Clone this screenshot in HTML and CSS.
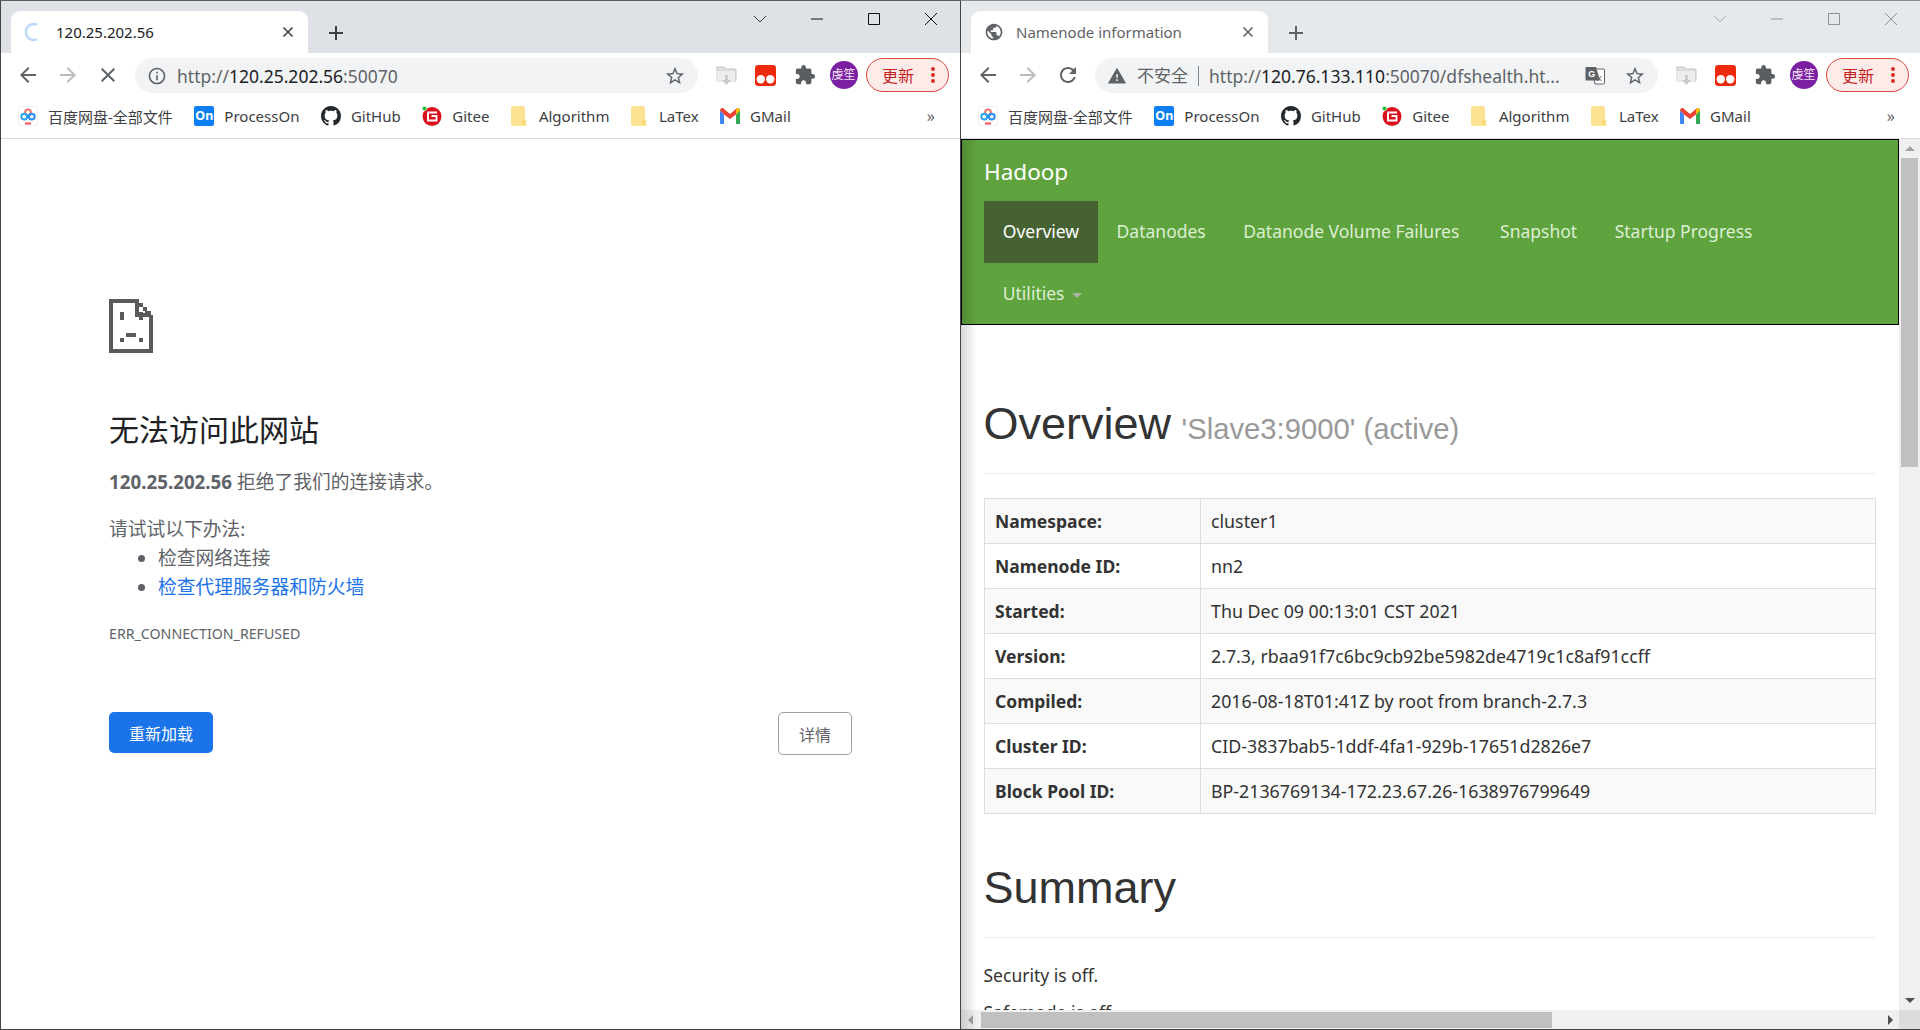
FILE: index.html
```html
<!DOCTYPE html>
<html lang="zh-CN">
<head>
  <meta charset="UTF-8" />
  <title>Two browser windows</title>
  <link rel="stylesheet" href="styles.css">
</head>
<body>

  <!-- Shared icons -->
  <svg class="sprite" width="0" height="0">
    <symbol id="i-back" viewBox="0 0 24 24"><path d="M20 11H7.83l5.59-5.59L12 4l-8 8 8 8 1.41-1.41L7.83 13H20v-2z"/></symbol>
    <symbol id="i-forward" viewBox="0 0 24 24"><path d="M4 11h12.17l-5.59-5.59L12 4l8 8-8 8-1.41-1.41L16.17 13H4v-2z"/></symbol>
    <symbol id="i-stop" viewBox="0 0 24 24"><path d="M19 6.41 17.59 5 12 10.59 6.41 5 5 6.41 10.59 12 5 17.59 6.41 19 12 13.41 17.59 19 19 17.59 13.41 12z"/></symbol>
    <symbol id="i-reload" viewBox="0 0 24 24"><path d="M17.65 6.35C16.2 4.9 14.21 4 12 4c-4.42 0-7.99 3.58-7.99 8s3.57 8 7.99 8c3.73 0 6.84-2.55 7.73-6h-2.08c-.82 2.33-3.04 4-5.65 4-3.31 0-6-2.69-6-6s2.69-6 6-6c1.66 0 3.14.69 4.22 1.78L13 11h7V4l-2.35 2.35z"/></symbol>
    <symbol id="i-info" viewBox="0 0 24 24"><path d="M11 7h2v2h-2zm0 4h2v6h-2zm1-9C6.48 2 2 6.48 2 12s4.48 10 10 10 10-4.48 10-10S17.52 2 12 2zm0 18c-4.41 0-8-3.59-8-8s3.59-8 8-8 8 3.59 8 8-3.59 8-8 8z"/></symbol>
    <symbol id="i-warn" viewBox="0 0 24 24"><path d="M1 21h22L12 2 1 21zm12-3h-2v-2h2v2zm0-4h-2v-4h2v4z"/></symbol>
    <symbol id="i-globe" viewBox="0 0 24 24"><path d="M12 2C6.48 2 2 6.48 2 12s4.48 10 10 10 10-4.48 10-10S17.52 2 12 2zm-1 17.93c-3.95-.49-7-3.85-7-7.93 0-.62.08-1.21.21-1.79L9 15v1c0 1.1.9 2 2 2v1.93zm6.9-2.54c-.26-.81-1-1.39-1.9-1.39h-1v-3c0-.55-.45-1-1-1H8v-2h2c.55 0 1-.45 1-1V7h2c1.1 0 2-.9 2-2v-.41c2.93 1.19 5 4.06 5 7.41 0 2.08-.8 3.97-2.1 5.39z"/></symbol>
    <symbol id="i-star" viewBox="0 0 24 24"><path d="M22 9.24l-7.19-.62L12 2 9.19 8.63 2 9.24l5.46 4.73L5.82 21 12 17.27 18.18 21l-1.63-7.03L22 9.24zM12 15.4l-3.76 2.27 1-4.28-3.32-2.88 4.38-.38L12 6.1l1.71 4.04 4.38.38-3.32 2.88 1 4.28L12 15.4z"/></symbol>
    <symbol id="i-puzzle" viewBox="0 0 24 24"><path d="M20.5 11H19V7c0-1.1-.9-2-2-2h-4V3.5C13 2.12 11.88 1 10.5 1S8 2.12 8 3.5V5H4c-1.1 0-1.99.9-1.99 2v3.8H3.5c1.49 0 2.7 1.21 2.7 2.7s-1.21 2.7-2.7 2.7H2V20c0 1.1.9 2 2 2h3.8v-1.5c0-1.49 1.21-2.7 2.7-2.7 1.49 0 2.7 1.21 2.7 2.7V22H17c1.1 0 2-.9 2-2v-4h1.5c1.38 0 2.5-1.12 2.5-2.5S21.88 11 20.5 11z"/></symbol>
    <symbol id="i-x" viewBox="0 0 12 12"><path d="M1.5 1.5l9 9M10.5 1.5l-9 9" fill="none" stroke="currentColor" stroke-width="1.6"/></symbol>
    <symbol id="i-plus" viewBox="0 0 16 16"><path d="M8 1v14M1 8h14" fill="none" stroke="currentColor" stroke-width="2"/></symbol>
    <symbol id="i-chevron" viewBox="0 0 14 8"><path d="M1 1l6 6 6-6" fill="none" stroke="currentColor" stroke-width="1"/></symbol>
    <symbol id="i-min" viewBox="0 0 12 12"><path d="M0 6h12" stroke="currentColor" stroke-width="1"/></symbol>
    <symbol id="i-max" viewBox="0 0 12 12"><path d="M.5.5h11v11H.5z" fill="none" stroke="currentColor" stroke-width="1"/></symbol>
    <symbol id="i-close" viewBox="0 0 12 12"><path d="M0 0l12 12M12 0L0 12" fill="none" stroke="currentColor" stroke-width="1"/></symbol>
    <symbol id="i-baidu" viewBox="0 0 20 20">
      <rect x=".5" y=".5" width="19" height="19" rx="3" fill="#fff" stroke="#eceef1"/>
      <circle cx="10" cy="6.4" r="2.9" fill="none" stroke="#f0776b" stroke-width="2"/>
      <circle cx="6.2" cy="10.6" r="2.9" fill="none" stroke="#2aa8f2" stroke-width="2"/>
      <circle cx="13.8" cy="10.6" r="2.9" fill="none" stroke="#2a8ef2" stroke-width="2"/>
      <path d="M7 17.5h6" stroke="#ef4d5b" stroke-width="2"/>
    </symbol>
    <symbol id="i-github" viewBox="0 0 16 16"><path fill="#24292e" d="M8 0C3.58 0 0 3.58 0 8c0 3.54 2.29 6.53 5.47 7.59.4.07.55-.17.55-.38 0-.19-.01-.82-.01-1.49-2.01.37-2.53-.49-2.69-.94-.09-.23-.48-.94-.82-1.13-.28-.15-.68-.52-.01-.53.63-.01 1.08.58 1.23.82.72 1.21 1.87.87 2.33.66.07-.52.28-.87.51-1.07-1.78-.2-3.64-.89-3.64-3.95 0-.87.31-1.59.82-2.15-.08-.2-.36-1.02.08-2.12 0 0 .67-.21 2.2.82.64-.18 1.32-.27 2-.27.68 0 1.36.09 2 .27 1.53-1.04 2.2-.82 2.2-.82.44 1.1.16 1.92.08 2.12.51.56.82 1.27.82 2.15 0 3.07-1.87 3.75-3.65 3.95.29.25.54.73.54 1.48 0 1.07-.01 1.93-.01 2.2 0 .21.15.46.55.38A8.013 8.013 0 0016 8c0-4.42-3.58-8-8-8z"/></symbol>
    <symbol id="i-gitee" viewBox="0 0 20 20">
      <circle cx="10" cy="10.5" r="9.5" fill="#d8121c"/>
      <path d="M5.5 6.5h9.5M6 6.5v8h8.5v-4.5H9.5" fill="none" stroke="#fff" stroke-width="1.9"/>
      <circle cx="2.5" cy="2.5" r="2.3" fill="#1bb933" stroke="#fff" stroke-width=".6"/>
    </symbol>
    <symbol id="i-folder" viewBox="0 0 16 20">
      <path d="M1.5 0h10.5a1.5 1.5 0 011.5 1.5V13l2 1v4.5a1.5 1.5 0 01-1.5 1.5H1.500A1.500 1.500 0 010 18.500V1.500A1.500 1.500 0 011.500 0z" fill="#fde293"/>
      <path d="M12.500 14v5" stroke="#f5c94e" stroke-width="1"/>
      <path d="M13.500 1v12" stroke="#f3d37a" stroke-width=".6"/>
    </symbol>
    <symbol id="i-gmail" viewBox="0 0 20 16">
      <path d="M0 2.500V16h4V6.500z" fill="#4285f4"/>
      <path d="M20 2.500V16h-4V6.500z" fill="#34a853"/>
      <path d="M0 2.500C0 .5 2 -.5 3.500.5L10 6l6.500-5.500C18 -.5 20 .5 20 2.500L16 6.500 10 11 4 6.500z" fill="#ea4335"/>
      <path d="M16 6.500l4-4C20 1 19 0 17.500 0L16 1.300z" fill="#fbbc04"/>
    </symbol>
    <symbol id="i-save" viewBox="0 0 21 21">
      <path d="M1 2h7l2 2h9a1 1 0 011 1v10a1 1 0 01-1 1H1z" fill="#dcdee0" stroke="#c2c4c6"/>
      <path d="M1 6h18v10H1z" fill="#eceded"/>
      <path d="M9 10h3v5h3l-4.500 5L6 15h3z" fill="#c8c9cb"/>
    </symbol>
    <symbol id="i-monkey" viewBox="0 0 20 20">
      <rect width="20" height="20" rx="3" fill="#ee2a0c"/>
      <circle cx="5.500" cy="13.500" r="4" fill="#fff"/>
      <circle cx="14.500" cy="13.500" r="4" fill="#fff"/>
    </symbol>
  </svg>

  <main class="desktop">

    <!-- Left window: connection refused -->
    <section class="window">
      <div class="tabstrip">
        <div class="tab">
          <svg class="tab-icon" viewBox="0 0 20 20"><path d="M13 2.600A8 8 0 1 0 13 17.400" fill="none" stroke="#bcd8fa" stroke-width="2.400"/></svg>
          <span class="tab-title">120.25.202.56</span>
          <svg class="tab-close"><use href="#i-x"/></svg>
        </div>
        <svg class="new-tab"><use href="#i-plus"/></svg>
        <div class="caption">
          <span class="caption-btn caption-menu"><svg class="glyph-chevron"><use href="#i-chevron"/></svg></span>
          <span class="caption-btn"><svg class="glyph"><use href="#i-min"/></svg></span>
          <span class="caption-btn"><svg class="glyph"><use href="#i-max"/></svg></span>
          <span class="caption-btn"><svg class="glyph"><use href="#i-close"/></svg></span>
        </div>
      </div>

      <div class="toolbar">
        <span class="tool"><svg class="tool-icon"><use href="#i-back"/></svg></span>
        <span class="tool tool-off"><svg class="tool-icon"><use href="#i-forward"/></svg></span>
        <span class="tool"><svg class="tool-icon"><use href="#i-stop"/></svg></span>
        <div class="omnibox">
          <svg class="omni-icon"><use href="#i-info"/></svg>
          <span class="url"><span class="url-dim">http://</span>120.25.202.56<span class="url-dim">:50070</span></span>
          <svg class="omni-star"><use href="#i-star"/></svg>
        </div>
        <div class="extensions">
          <span class="tool"><svg class="ext-icon"><use href="#i-save"/></svg></span>
          <span class="tool"><svg class="ext-icon"><use href="#i-monkey"/></svg></span>
          <span class="tool"><svg class="ext-icon ext-puzzle"><use href="#i-puzzle"/></svg></span>
          <span class="tool"><span class="avatar">虔笙</span></span>
        </div>
        <div class="update"><span>更新</span><i class="dots"></i></div>
      </div>

      <div class="bookmarks">
        <span class="bm"><svg class="bm-icon"><use href="#i-baidu"/></svg>百度网盘-全部文件</span>
        <span class="bm"><span class="bm-on">On</span>ProcessOn</span>
        <span class="bm"><svg class="bm-icon"><use href="#i-github"/></svg>GitHub</span>
        <span class="bm"><svg class="bm-icon"><use href="#i-gitee"/></svg>Gitee</span>
        <span class="bm"><svg class="bm-folder"><use href="#i-folder"/></svg>Algorithm</span>
        <span class="bm"><svg class="bm-folder"><use href="#i-folder"/></svg>LaTex</span>
        <span class="bm"><svg class="bm-icon"><use href="#i-gmail"/></svg>GMail</span>
        <span class="bm-more">»</span>
      </div>

      <div class="error-page">
        <svg class="sad-page" viewBox="0 0 44 54" shape-rendering="crispEdges">
          <path fill="#5a5a5a" fill-rule="evenodd" d="M0 0H30V4H34V8H38V12H42V16H44V54H0ZM4 4V50H40V18H26V4ZM30 8V14H36V12H34V8Z"/>
          <path fill="#5a5a5a" d="M11 13H15V21H11ZM30 13H34V21H30ZM17 34H27V38H17ZM11 39H15V43H11ZM30 39H34V43H30Z"/>
        </svg>
        <h1 class="error-title">无法访问此网站</h1>
        <p class="error-line"><strong>120.25.202.56</strong> 拒绝了我们的连接请求。</p>
        <p class="error-line">请试试以下办法:</p>
        <ul class="error-list">
          <li>检查网络连接</li>
          <li><a href="#proxy">检查代理服务器和防火墙</a></li>
        </ul>
        <div class="error-code">ERR_CONNECTION_REFUSED</div>
        <div class="error-actions">
          <button class="btn-reload">重新加载</button>
          <button class="btn-details">详情</button>
        </div>
      </div>
    </section>

    <!-- Right window: Hadoop namenode page -->
    <section class="window window-inactive">
      <div class="tabstrip">
        <div class="tab">
          <svg class="tab-icon tab-globe"><use href="#i-globe"/></svg>
          <span class="tab-title">Namenode information</span>
          <svg class="tab-close"><use href="#i-x"/></svg>
        </div>
        <svg class="new-tab"><use href="#i-plus"/></svg>
        <div class="caption">
          <span class="caption-btn caption-menu"><svg class="glyph-chevron"><use href="#i-chevron"/></svg></span>
          <span class="caption-btn"><svg class="glyph"><use href="#i-min"/></svg></span>
          <span class="caption-btn"><svg class="glyph"><use href="#i-max"/></svg></span>
          <span class="caption-btn"><svg class="glyph"><use href="#i-close"/></svg></span>
        </div>
      </div>

      <div class="toolbar">
        <span class="tool"><svg class="tool-icon"><use href="#i-back"/></svg></span>
        <span class="tool tool-off"><svg class="tool-icon"><use href="#i-forward"/></svg></span>
        <span class="tool"><svg class="tool-icon"><use href="#i-reload"/></svg></span>
        <div class="omnibox">
          <svg class="omni-icon"><use href="#i-warn"/></svg>
          <span class="not-secure">不安全</span>
          <span class="url"><span class="url-dim">http://</span>120.76.133.110<span class="url-dim">:50070/dfshealth.ht...</span></span>
          <svg class="omni-translate" viewBox="0 0 20 20">
            <path d="M7 3h11.500a1 1 0 011 1v13a1 1 0 01-1 1H10z" fill="#fff" stroke="#5f6368"/>
            <path d="M1.500 1h9.500l4 13.500H1.500a1 1 0 01-1-1V2a1 1 0 011-1z" fill="#5f6368"/>
            <text x="3.200" y="11" class="translate-g">G</text>
            <path d="M12 10l4.500 5M16.500 10l-4.500 5" stroke="#5f6368" stroke-width="1"/>
          </svg>
          <svg class="omni-star"><use href="#i-star"/></svg>
        </div>
        <div class="extensions">
          <span class="tool"><svg class="ext-icon"><use href="#i-save"/></svg></span>
          <span class="tool"><svg class="ext-icon"><use href="#i-monkey"/></svg></span>
          <span class="tool"><svg class="ext-icon ext-puzzle"><use href="#i-puzzle"/></svg></span>
          <span class="tool"><span class="avatar">虔笙</span></span>
        </div>
        <div class="update"><span>更新</span><i class="dots"></i></div>
      </div>

      <div class="bookmarks">
        <span class="bm"><svg class="bm-icon"><use href="#i-baidu"/></svg>百度网盘-全部文件</span>
        <span class="bm"><span class="bm-on">On</span>ProcessOn</span>
        <span class="bm"><svg class="bm-icon"><use href="#i-github"/></svg>GitHub</span>
        <span class="bm"><svg class="bm-icon"><use href="#i-gitee"/></svg>Gitee</span>
        <span class="bm"><svg class="bm-folder"><use href="#i-folder"/></svg>Algorithm</span>
        <span class="bm"><svg class="bm-folder"><use href="#i-folder"/></svg>LaTex</span>
        <span class="bm"><svg class="bm-icon"><use href="#i-gmail"/></svg>GMail</span>
        <span class="bm-more">»</span>
      </div>

      <div class="viewport">
        <div class="dfs-page">
          <nav class="hadoop-nav">
            <div class="brand">Hadoop</div>
            <ul class="nav-row">
              <li class="nav-active">Overview</li>
              <li>Datanodes</li>
              <li>Datanode Volume Failures</li>
              <li>Snapshot</li>
              <li>Startup Progress</li>
            </ul>
            <ul class="nav-row">
              <li>Utilities <i class="caret"></i></li>
            </ul>
          </nav>

          <div class="dfs-body">
            <h1 class="page-header">Overview <small>'Slave3:9000' (active)</small></h1>
            <table class="info-table">
              <tr><th>Namespace:</th><td>cluster1</td></tr>
              <tr><th>Namenode ID:</th><td>nn2</td></tr>
              <tr><th>Started:</th><td>Thu Dec 09 00:13:01 CST 2021</td></tr>
              <tr><th>Version:</th><td>2.7.3, rbaa91f7c6bc9cb92be5982de4719c1c8af91ccff</td></tr>
              <tr><th>Compiled:</th><td>2016-08-18T01:41Z by root from branch-2.7.3</td></tr>
              <tr><th>Cluster ID:</th><td>CID-3837bab5-1ddf-4fa1-929b-17651d2826e7</td></tr>
              <tr><th>Block Pool ID:</th><td>BP-2136769134-172.23.67.26-1638976799649</td></tr>
            </table>
            <h1 class="page-header summary">Summary</h1>
            <p class="dfs-text">Security is off.</p>
            <p class="dfs-text">Safemode is off.</p>
          </div>
        </div>

        <!-- Scrollbars -->
        <div class="vscroll">
          <i class="arrow arrow-up"></i>
          <div class="vscroll-track"><div class="vscroll-thumb"></div></div>
          <i class="arrow arrow-down"></i>
        </div>
        <div class="hscroll">
          <i class="arrow arrow-left"></i>
          <div class="hscroll-track"><div class="hscroll-thumb"></div></div>
          <i class="arrow arrow-right"></i>
        </div>
        <div class="scroll-corner"></div>

        <div class="window-shadow"></div>
      </div>
    </section>
  </main>
</body>
</html>
```

FILE: styles.css
```css
/* Basic Reset */
* {
  margin: 0;
  padding: 0;
  box-sizing: border-box;
}

body {
  font-family: "Noto Sans", "Noto Sans CJK SC", sans-serif;
  color: #333;
  background: #3a3a3a;
  overflow: hidden;
}

.sprite {
  position: absolute;
}

.translate-g {
  font-family: "Liberation Sans", sans-serif;
  font-size: 9px;
  font-weight: bold;
  fill: #fff;
}

.desktop {
  display: flex;
  width: 1920px;
  height: 1030px;
}

/* Window frame */
.window {
  width: 960px;
  height: 1030px;
  display: flex;
  flex-direction: column;
  overflow: hidden;
  background: #fff;
  border-top: 1px solid #5c5c5c;
  border-left: 1px solid #444;
  border-bottom: 1px solid #444;
}

.tabstrip {
  height: 52px;
  flex: none;
  display: flex;
  background: #dee1e6;
  color: #202124;
  padding-left: 10px;
}

.window-inactive .tabstrip {
  background: #e6e9ec;
}

.window-inactive {
  border-top-color: #8e8e8e;
}

.tab {
  width: 297px;
  height: 42px;
  margin-top: 10px;
  display: flex;
  align-items: center;
  background: #fff;
  border-radius: 9px 9px 0 0;
  padding-left: 13px;
}

.tab-icon {
  width: 20px;
  height: 20px;
  flex: none;
  fill: #5f6368;
}

.tab-title {
  margin-left: 12px;
  font-size: 15px;
  color: #202124;
}

.window-inactive .tab-title {
  color: #5f6368;
}

.tab-close {
  width: 12px;
  height: 12px;
  margin-left: auto;
  margin-right: 14px;
  color: #3c4043;
}

.window-inactive .tab-close {
  color: #5f6368;
}

.new-tab {
  width: 16px;
  height: 16px;
  margin: 24px 0 0 20px;
  color: #3c4043;
}

.window-inactive .new-tab {
  color: #5f6368;
}

.caption {
  margin-left: auto;
  padding-right: 1px;
  display: flex;
  align-items: flex-start;
}

.caption-btn {
  width: 57px;
  height: 36px;
  display: flex;
  align-items: center;
  justify-content: center;
  color: #111;
}

.caption-menu {
  width: 40px;
  margin-right: 8px;
  color: #3c4043;
}

.window-inactive .caption-btn {
  color: #8f9295;
}

.window-inactive .caption-menu {
  color: #a9acaf;
}

.glyph {
  width: 12px;
  height: 12px;
}

.glyph-chevron {
  width: 14px;
  height: 8px;
}

/* Toolbar */
.toolbar {
  height: 40px;
  flex: none;
  display: flex;
  align-items: flex-start;
  padding: 5px 0 0 7px;
}

.tool {
  width: 40px;
  height: 34px;
  flex: none;
  display: flex;
  align-items: center;
  justify-content: center;
  fill: #5f6368;
}

.tool-off {
  fill: #babcbe;
}

.tool-icon {
  width: 24px;
  height: 24px;
}

.omnibox {
  width: 563px;
  height: 35px;
  margin-left: 7px;
  flex: none;
  display: flex;
  align-items: center;
  background: #f1f3f4;
  border-radius: 18px;
  padding-left: 12px;
  font-size: 17.500px;
  color: #202124;
}

.omni-icon {
  width: 20px;
  height: 20px;
  flex: none;
  fill: #5f6368;
}

.url {
  margin-left: 10px;
  white-space: nowrap;
}

.url-dim {
  color: #5f6368;
}

.not-secure {
  margin-left: 10px;
  padding-right: 10px;
  color: #5f6368;
  border-right: 1px solid #80868b;
  line-height: 20px;
  font-size: 17px;
}

.omni-translate {
  width: 20px;
  height: 20px;
  margin-left: auto;
  flex: none;
}

.omni-star {
  width: 22px;
  height: 22px;
  margin: 0 12px 0 auto;
  flex: none;
  fill: #5f6368;
}

.omni-translate + .omni-star {
  margin-left: 19px;
}

.extensions {
  display: flex;
  margin-left: 9px;
}

.extensions .tool {
  width: 39px;
}

.ext-icon {
  width: 21px;
  height: 21px;
}

.ext-puzzle {
  width: 22px;
  height: 22px;
  fill: #5a5e62;
}

.avatar {
  width: 28px;
  height: 28px;
  border-radius: 50%;
  background: #7b1fa2;
  color: #f3e5f5;
  font-size: 12px;
  line-height: 28px;
  text-align: center;
  white-space: nowrap;
}

.update {
  width: 83px;
  height: 34px;
  margin-left: 3px;
  flex: none;
  display: flex;
  align-items: center;
  padding-left: 15px;
  border: 1px solid #d9473e;
  border-radius: 17px;
  background: #fcebe9;
  color: #c5221f;
  font-size: 16px;
}

.dots {
  width: 4px;
  height: 4px;
  margin-left: 17px;
  border-radius: 50%;
  background: #d93025;
  box-shadow: 0 -6px 0 #d93025, 0 6px 0 #d93025;
}

/* Bookmarks */
.bookmarks {
  height: 46px;
  flex: none;
  display: flex;
  align-items: center;
  padding: 1px 0 0 17px;
  background: #fff;
  border-bottom: 1px solid #dadce0;
  font-size: 15px;
  color: #3c4043;
}

.bm {
  display: flex;
  align-items: center;
  gap: 10px;
  margin-right: 21.500px;
  white-space: nowrap;
}

.bm-icon {
  width: 20px;
  height: 20px;
  flex: none;
}

.bm-folder {
  width: 16px;
  height: 20px;
  flex: none;
  margin-right: 2px;
}

.bm-on {
  width: 20px;
  height: 20px;
  flex: none;
  background: #0c7ff2;
  border-radius: 2px;
  color: #fff;
  font-size: 12.500px;
  font-weight: bold;
  line-height: 20px;
  text-align: center;
}

.bm-more {
  margin-left: auto;
  margin-right: 25px;
  font-size: 16px;
  line-height: 16px;
  color: #5f6368;
}

/* Error page */
.error-page {
  flex: 1;
  padding: 160px 0 0 108px;
  font-size: 18.750px;
  line-height: 28px;
  color: #5f6368;
}

.sad-page {
  display: block;
  width: 44px;
  height: 54px;
}

.error-title {
  margin-top: 58px;
  font-size: 30px;
  line-height: 38px;
  font-weight: 400;
  color: #202124;
}

.error-line {
  margin-top: 19px;
}

.error-line strong {
  font-weight: 700;
}

.error-list {
  padding-left: 49px;
}

.error-list li {
  line-height: 29px;
}

.error-list a {
  color: #1a73e8;
  text-decoration: none;
}

.error-code {
  margin-top: 23px;
  font-size: 14.200px;
  line-height: 20px;
}

.error-actions {
  width: 743px;
  margin-top: 68px;
  display: flex;
  justify-content: space-between;
  align-items: flex-start;
}

.btn-reload,
.btn-details {
  font-family: inherit;
  font-size: 16px;
  border-radius: 5px;
}

.btn-reload {
  width: 104px;
  height: 41px;
  border: none;
  background: #1a73e8;
  color: #fff;
}

.btn-details {
  width: 74px;
  height: 43px;
  border: 1px solid #9aa0a6;
  background: #fff;
  color: #5f6368;
}

/* Hadoop page */
.viewport {
  flex: 1;
  min-height: 0;
  position: relative;
  display: grid;
  grid-template-columns: 1fr 21px;
  grid-template-rows: 1fr 19px;
}

.dfs-page {
  overflow: hidden;
  min-height: 0;
  font-size: 17.500px;
  line-height: 25px;
}

.hadoop-nav {
  height: 186px;
  background: #5fa33e;
  border: 1px solid #000;
  padding-left: 22px;
  color: #dcefd2;
}

.brand {
  height: 61px;
  font-size: 22.500px;
  line-height: 63px;
  color: #fff;
}

.nav-row {
  display: flex;
  list-style: none;
}

.nav-row li {
  height: 62px;
  line-height: 60px;
  padding: 0 18.750px;
  white-space: nowrap;
}

.nav-row li:nth-child(3) {
  padding-right: 22px;
}

.nav-row .nav-active {
  background: #466233;
  color: #fff;
}

.caret {
  display: inline-block;
  width: 0;
  height: 0;
  margin-left: 3px;
  vertical-align: middle;
  border-top: 5px solid #a9b5a3;
  border-left: 5px solid transparent;
  border-right: 5px solid transparent;
}

.dfs-body {
  padding: 0 23px 0 22.500px;
}

.page-header {
  margin-top: 74px;
  padding-bottom: 18.750px;
  border-bottom: 1px solid #eee;
  font-family: "Liberation Sans", Arial, sans-serif;
  font-size: 45px;
  line-height: 49.500px;
  font-weight: 400;
  color: #333;
}

.page-header small {
  margin-left: -2px;
  font-size: 29.250px;
  color: #999;
}

.page-header.summary {
  margin-top: 49px;
  padding-bottom: 23.750px;
}

.info-table {
  width: 100%;
  margin-top: 24px;
  border-collapse: collapse;
}

.info-table th,
.info-table td {
  height: 45px;
  padding: 0 10.500px;
  border: 1px solid #ddd;
  text-align: left;
  color: #333;
}

.info-table td {
  font-size: 17.800px;
}

.info-table th {
  width: 216px;
  font-weight: 700;
}

.info-table tr:nth-child(odd) th,
.info-table tr:nth-child(odd) td {
  background: #f9f9f9;
}

.dfs-text {
  margin-top: 25px;
}

.dfs-text + .dfs-text {
  margin-top: 12.500px;
}

/* Scrollbars */
.vscroll {
  display: flex;
  flex-direction: column;
  align-items: center;
  background: #f0f0f0;
}

.vscroll-track {
  flex: 1;
  width: 100%;
  padding: 0 2px;
}

.vscroll-thumb {
  height: 309px;
  background: #c0c0c0;
}

.hscroll {
  display: flex;
  align-items: center;
  background: #f0f0f0;
}

.hscroll-track {
  flex: 1;
  height: 100%;
  padding: 2px 0 1px;
}

.hscroll-thumb {
  width: 571px;
  height: 100%;
  margin-left: 1px;
  background: #c0c0c0;
}

.scroll-corner {
  background: #dcdcdc;
}

.arrow {
  flex: none;
  width: 0;
  height: 0;
}

.arrow-up {
  margin: 7px 0;
  border-bottom: 5px solid #a3a3a3;
  border-left: 5px solid transparent;
  border-right: 5px solid transparent;
}

.arrow-down {
  margin: 7px 0;
  border-top: 5px solid #505050;
  border-left: 5px solid transparent;
  border-right: 5px solid transparent;
}

.arrow-left {
  margin: 0 7px;
  border-right: 5px solid #a3a3a3;
  border-top: 5px solid transparent;
  border-bottom: 5px solid transparent;
}

.arrow-right {
  margin: 0 6px;
  border-left: 5px solid #505050;
  border-top: 5px solid transparent;
  border-bottom: 5px solid transparent;
}

/* Shadow the left window casts on the right one */
.window-shadow {
  position: absolute;
  top: 0;
  bottom: 0;
  left: 0;
  width: 16px;
  pointer-events: none;
  background: linear-gradient(90deg, rgba(0, 0, 0, 0.16), rgba(0, 0, 0, 0));
}
```
